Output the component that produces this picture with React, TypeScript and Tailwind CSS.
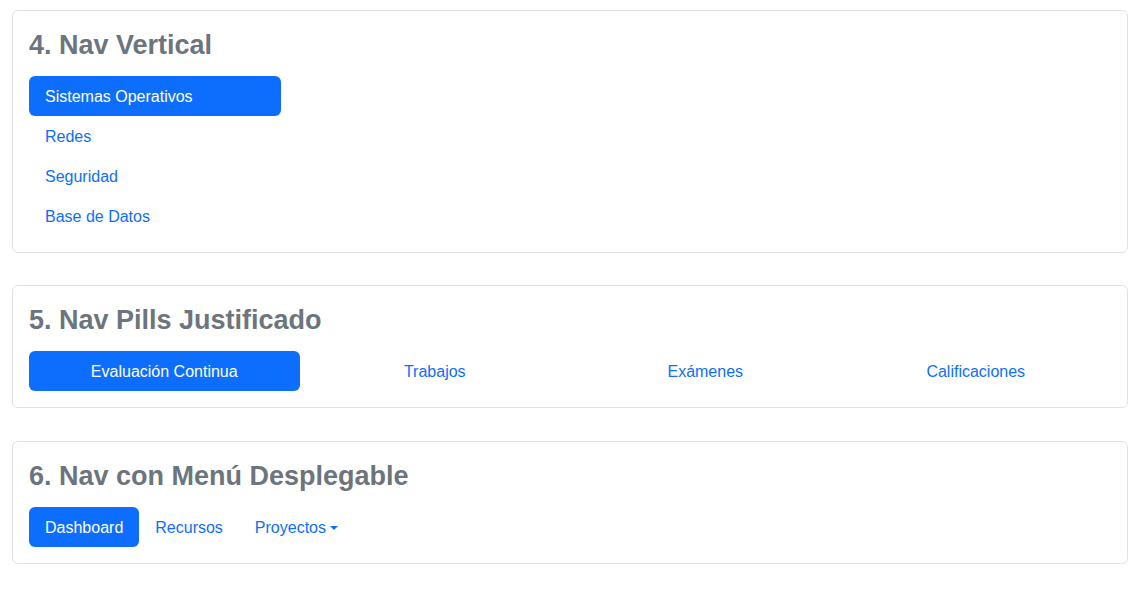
import React, { useState } from 'react';

const font = { fontFamily: '"Segoe UI", "Liberation Sans", Arial, sans-serif' };

const Card: React.FC<{ title: string; className?: string; children: React.ReactNode }> = ({ title, className, children }) => (
  <div className={`rounded-md border border-[#dee2e6] bg-white p-4 ${className ?? ''}`}>
    <h3 className="mb-[14px] pt-[2px] text-[27px] font-semibold leading-[33.2px] text-[#6c757d]">{title}</h3>
    {children}
  </div>
);

const pill = (active: boolean) =>
  active
    ? 'rounded-md bg-[#0d6efd] px-4 pb-[7px] pt-[9px] text-white'
    : 'rounded-md px-4 pb-[7px] pt-[9px] text-[#0d6efd] hover:text-[#0a58ca]';

const App: React.FC = () => {
  const [vertical, setVertical] = useState('Sistemas Operativos');
  const [justified, setJustified] = useState('Evaluación Continua');
  const [menu, setMenu] = useState('Dashboard');

  return (
    <div className="min-h-screen bg-white pl-3 pr-[18px] pt-[10px] text-base leading-6" style={font}>
      <div className="flex flex-col">
        <Card title="4. Nav Vertical">
          <div className="flex w-[252px] flex-col">
            {['Sistemas Operativos', 'Redes', 'Seguridad', 'Base de Datos'].map((item) => (
              <button key={item} onClick={() => setVertical(item)} className={`text-left ${pill(vertical === item)}`}>
                {item}
              </button>
            ))}
          </div>
        </Card>

        <Card title="5. Nav Pills Justificado" className="mt-[32px]">
          <div className="grid grid-cols-4">
            {['Evaluación Continua', 'Trabajos', 'Exámenes', 'Calificaciones'].map((item) => (
              <button key={item} onClick={() => setJustified(item)} className={`text-center ${pill(justified === item)}`}>
                {item}
              </button>
            ))}
          </div>
        </Card>

        <Card title="6. Nav con Menú Desplegable" className="mt-[32.6px]">
          <div className="flex">
            {['Dashboard', 'Recursos'].map((item) => (
              <button key={item} onClick={() => setMenu(item)} className={pill(menu === item)}>
                {item}
              </button>
            ))}
            <button className={`flex items-center ${pill(false)}`}>
              Proyectos
              <span className="ml-[4px] inline-block h-0 w-0 border-x-[4.8px] border-t-[4.8px] border-x-transparent border-t-[#0d6efd]" />
            </button>
          </div>
        </Card>
      </div>
    </div>
  );
};

export default App;
